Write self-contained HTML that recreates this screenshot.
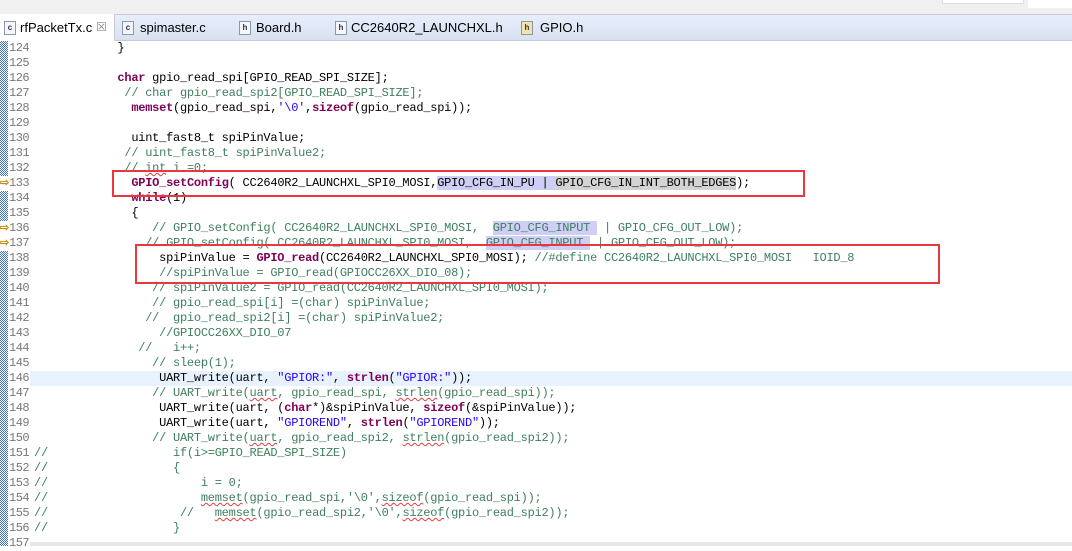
<!DOCTYPE html>
<html><head><meta charset="utf-8"><style>
body{margin:0;width:1072px;height:546px;overflow:hidden;background:#fff;position:relative;font-family:"Liberation Sans",sans-serif}
#top{position:absolute;left:0;top:0;width:1072px;height:14px;background:#f0f0f0}
#topbox{position:absolute;left:942px;top:0;width:80px;height:3px;background:#fff;border:1px solid #ddd;border-top:none}
#topw{position:absolute;left:1028px;top:0;width:44px;height:8px;background:#fff}
#bar{position:absolute;left:0;top:14px;width:1072px;height:25px;background:linear-gradient(#e8eefb,#d9e1f1);border-top:1px solid #c5cbdc;border-bottom:1px solid #c5cbdc}
#atab{position:absolute;left:0;top:14px;width:114px;height:27px;background:#fff;border-right:1px solid #c5cbdc}
.tab{position:absolute;top:19px;font-size:13px;color:#000;line-height:17px;white-space:nowrap}
.ic{position:absolute;top:21px;width:10px;height:12px;border:1px solid #8899aa;background:#f4f6fa;font:bold 8px "Liberation Sans",sans-serif;color:#335;text-align:center;line-height:12px}
#strip{position:absolute;left:0;top:41px;width:8px;height:505px;background-color:#fff;background-image:repeating-conic-gradient(#3b6fd8 0 25%,#fff 0 50%);background-size:2px 2px}
.ln{position:absolute;left:9px;width:26px;font:12px "Liberation Mono",monospace;letter-spacing:-0.5px;color:#787878;height:15px;line-height:15px}
.cl{position:absolute;left:34px;font:12px "Liberation Mono",monospace;letter-spacing:-0.25px;white-space:pre;color:#000;height:15px;line-height:15px}
.k{color:#7f0055;font-weight:bold}
.c{color:#3f7f5f}
.s{color:#2a00ff}
.hl{background:#cfcff5}
.hg{background:#d4d4d4}
.u{text-decoration:underline wavy #e04040;text-decoration-thickness:1px}
.box{position:absolute;border:2px solid #e8383d}
#cur{position:absolute;left:30px;width:1042px;height:15px;background:#e8f2fe}
.arr{position:absolute;left:0;width:9px;color:#c88a00;background:#fff;font-weight:bold;font-size:11px;line-height:15px}
#bot{position:absolute;left:30px;top:542px;width:1042px;height:4px;background:#e8e8e8}
</style></head><body>
<div id="top"></div><div id="topbox"></div><div id="topw"></div>
<div id="bar"></div><div id="atab"></div>
<div class="ic" style="left:4px">c</div><div class="tab" style="left:20px">rfPacketTx.c</div><div class="tab" style="left:96px;color:#888;font-size:12px">☒</div>
<div class="ic" style="left:122px">c</div><div class="tab" style="left:140px">spimaster.c</div>
<div class="ic" style="left:239px">h</div><div class="tab" style="left:256px">Board.h</div>
<div class="ic" style="left:335px">h</div><div class="tab" style="left:351px">CC2640R2_LAUNCHXL.h</div>
<div class="ic" style="left:521px;background:#f3e3a8">h</div><div class="tab" style="left:540px">GPIO.h</div>
<div id="strip"></div>
<div id="cur" style="top:371px"></div>
<div id="code"></div>
<script>
var L=[
[124,"            }"],
[125,""],
[126,"            <span class=k>char</span> gpio_read_spi[GPIO_READ_SPI_SIZE];"],
[127,"             <span class=c>// char gpio_read_spi2[GPIO_READ_SPI_SIZE];</span>"],
[128,"              <span class=k>memset</span>(gpio_read_spi,<span class=s>'\\0'</span>,<span class=k>sizeof</span>(gpio_read_spi));"],
[129,""],
[130,"              uint_fast8_t spiPinValue;"],
[131,"             <span class=c>// uint_fast8_t spiPinValue2;</span>"],
[132,"             <span class=c>// <span class=u>int</span> i =0;</span>"],
[133,"              <span class=k>GPIO_setConfig</span>( CC2640R2_LAUNCHXL_SPI0_MOSI,<span class=hl>GPIO_CFG_IN_PU | </span><span class=hg>GPIO_CFG_IN_INT_BOTH_EDGES</span>);"],
[134,"              <span class=k>while</span>(1)"],
[135,"              {"],
[136,"                 <span class=c>// GPIO_setConfig( CC2640R2_LAUNCHXL_SPI0_MOSI,  <span class=hl>GPIO_CFG_INPUT </span> | GPIO_CFG_OUT_LOW);</span>"],
[137,"                <span class=c>// GPIO_setConfig( CC2640R2_LAUNCHXL_SPI0_MOSI,  <span class=hl>GPIO_CFG_INPUT </span> | GPIO_CFG_OUT_LOW);</span>"],
[138,"                  spiPinValue = <span class=k>GPIO_read</span>(CC2640R2_LAUNCHXL_SPI0_MOSI); <span class=c>//#define CC2640R2_LAUNCHXL_SPI0_MOSI   IOID_8</span>"],
[139,"                  <span class=c>//spiPinValue = GPIO_read(GPIOCC26XX_DIO_08);</span>"],
[140,"                 <span class=c>// spiPinValue2 = GPIO_read(CC2640R2_LAUNCHXL_SPI0_MOSI);</span>"],
[141,"                 <span class=c>// gpio_read_spi[i] =(char) spiPinValue;</span>"],
[142,"                <span class=c>//  gpio_read_spi2[i] =(char) spiPinValue2;</span>"],
[143,"                  <span class=c>//GPIOCC26XX_DIO_07</span>"],
[144,"               <span class=c>//   i++;</span>"],
[145,"                 <span class=c>// sleep(1);</span>"],
[146,"                  UART_write(uart, <span class=s>\"GPIOR:\"</span>, <span class=k>strlen</span>(<span class=s>\"GPIOR:\"</span>));"],
[147,"                 <span class=c>// UART_write(<span class=u>uart</span>, gpio_read_spi, <span class=u>strlen</span>(gpio_read_spi));</span>"],
[148,"                  UART_write(uart, (<span class=k>char</span>*)&amp;spiPinValue, <span class=k>sizeof</span>(&amp;spiPinValue));"],
[149,"                  UART_write(uart, <span class=s>\"GPIOREND\"</span>, <span class=k>strlen</span>(<span class=s>\"GPIOREND\"</span>));"],
[150,"                 <span class=c>// UART_write(<span class=u>uart</span>, gpio_read_spi2, <span class=u>strlen</span>(gpio_read_spi2));</span>"],
[151,"<span class=c>//                  if(i&gt;=GPIO_READ_SPI_SIZE)</span>"],
[152,"<span class=c>//                  {</span>"],
[153,"<span class=c>//                      i = 0;</span>"],
[154,"<span class=c>//                      <span class=u>memset</span>(gpio_read_spi,'\\0',<span class=u>sizeof</span>(gpio_read_spi));</span>"],
[155,"<span class=c>//                   //   <span class=u>memset</span>(gpio_read_spi2,'\\0',<span class=u>sizeof</span>(gpio_read_spi2));</span>"],
[156,"<span class=c>//                  }</span>"],
[157,""]];
var h="";
L.forEach(function(l,i){var t=(41+i*15).toFixed(1);
h+='<div class="ln" style="top:'+t+'px">'+l[0]+'</div><div class="cl" style="top:'+t+'px">'+l[1]+'</div>';
if(l[0]==133||l[0]==136||l[0]==137)h+='<div class="arr" style="top:'+t+'px">⇨</div>';});
document.getElementById('code').innerHTML=h;
</script>
<div class="box" style="left:112px;top:170px;width:689px;height:23px"></div>
<div class="box" style="left:135px;top:244px;width:801px;height:36px"></div>
<div id="bot"></div>
</body></html>
